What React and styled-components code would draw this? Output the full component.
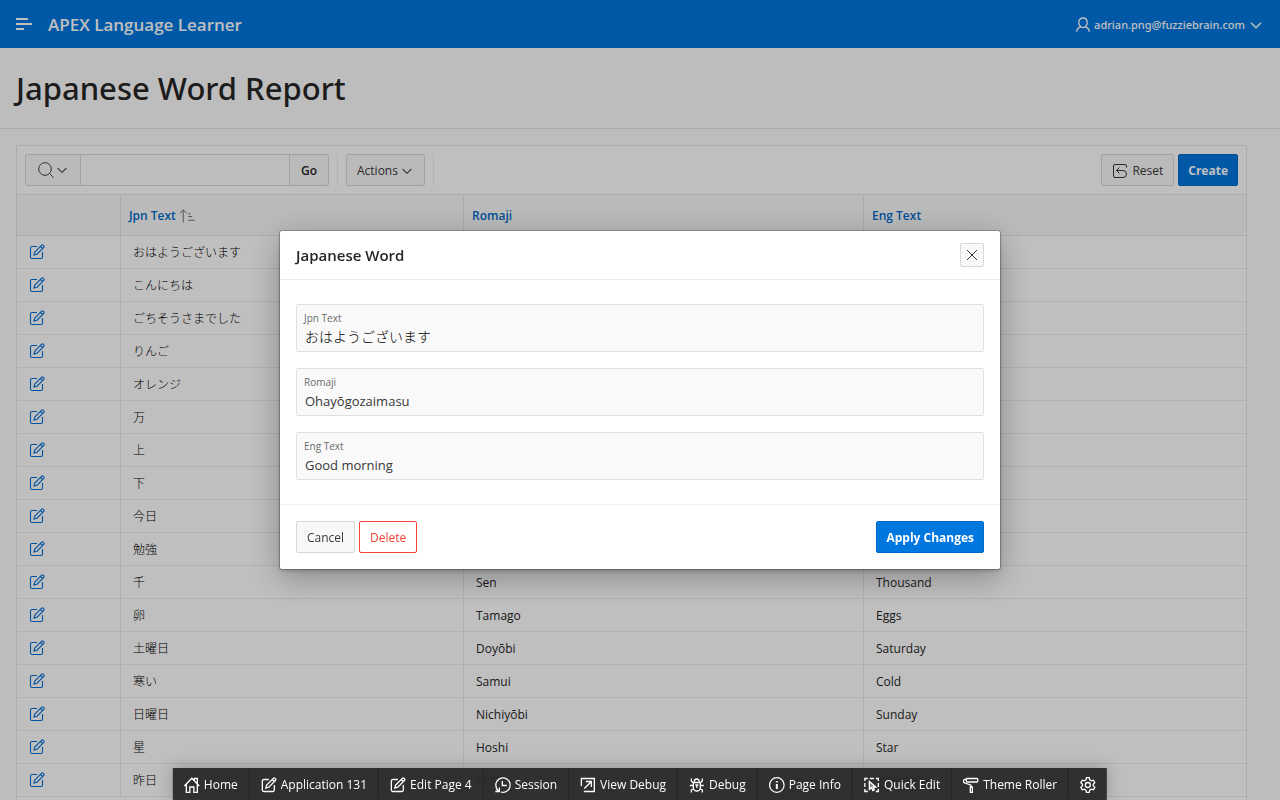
import React, { useState } from "react";
import styled, { createGlobalStyle, css } from "styled-components";

const GlobalStyle = createGlobalStyle`
  *, *::before, *::after { box-sizing: border-box; }
  body {
    margin: 0;
    overflow: hidden;
    background: #fcfcfc;
    color: #262626;
    font-family: "Open Sans", "Noto Sans CJK JP", sans-serif;
    font-size: 12px;
    line-height: 16px;
  }
  button, input { font: inherit; color: inherit; margin: 0; }
  svg { display: block; flex: none; }
`;

const Page = styled.div`
  display: flex;
  flex-direction: column;
  height: 100vh;
  overflow: hidden;
`;

const Header = styled.header`
  display: flex;
  flex: none;
  align-items: center;
  height: 48px;
  padding: 0 16px;
  background: #0076df;
  color: #fff;
`;

const PlainButton = styled.button`
  display: flex;
  align-items: center;
  gap: 4px;
  padding: 0;
  border: 0;
  background: none;
`;

const AppName = styled.a`
  margin-left: 16px;
  padding-top: 2px;
  color: inherit;
  font-size: 17px;
  font-weight: 600;
  line-height: 24px;
  text-decoration: none;
`;

const UserButton = styled(PlainButton)`
  gap: 3px;
  margin-left: auto;
  padding-top: 1px;
  font-family: "Noto Sans", sans-serif;
  font-size: 11px;
  font-weight: 500;
`;

const TitleBar = styled.div`
  flex: none;
  padding: 20px 16px;
  border-bottom: 1px solid #e6e6e6;
`;

const PageTitle = styled.h1`
  margin: 0;
  padding-top: 1px;
  font-family: "Noto Sans", sans-serif;
  font-size: 31px;
  line-height: 39px;
  font-weight: 500;
`;

const Main = styled.main`
  display: flex;
  flex: 1;
  flex-direction: column;
  padding: 16px 33px 0 16px;
`;

const Report = styled.section`
  flex: 1;
  border: 1px solid #e6e6e6;
  border-bottom: 0;
  border-radius: 2px 2px 0 0;
  background: #fff;
`;

const Toolbar = styled.div`
  display: flex;
  align-items: center;
  gap: 8px;
  padding: 8px;
  border-bottom: 1px solid #e6e6e6;
`;

const ToolbarEnd = styled.div`
  display: flex;
  gap: 4px;
  margin-left: auto;
`;

const Divider = styled.span`
  width: 1px;
  height: 32px;
  background: #ededed;
`;

const kinds = {
  normal: css`
    background: #f8f8f8;
    border-color: #d8d8d8;
    color: #383838;
  `,
  hot: css`
    background: #0076df;
    border-color: #0069c7;
    color: #fff;
    font-weight: 700;
  `,
  danger: css`
    background: #fff;
    border-color: #f44336;
    color: #f44336;
  `,
};

const Button = styled.button`
  display: inline-flex;
  align-items: center;
  justify-content: center;
  gap: 4px;
  height: 32px;
  padding: ${({ $kind }) => ($kind === "hot" ? "2px 9px 0" : "2px 10px 0")};
  border: 1px solid;
  border-radius: 2px;
  white-space: nowrap;
  ${({ $kind = "normal" }) => kinds[$kind]}
`;

const MenuButton = styled(Button)`
  gap: 2px;
`;

const SearchGroup = styled.form`
  display: flex;
  height: 32px;
  border: 1px solid #d8d8d8;
  border-radius: 2px;
  background: #f8f8f8;
`;

const SearchMenu = styled(PlainButton)`
  width: 54px;
  justify-content: center;
  gap: 1px;
  color: #404040;
`;

const SearchInput = styled.input`
  width: 210px;
  padding: 0 8px;
  border: solid #d8d8d8;
  border-width: 0 1px;
  background: #fdfdfd;
`;

const GoButton = styled(PlainButton)`
  width: 38px;
  padding-top: 2px;
  justify-content: center;
  font-weight: 600;
`;

const Table = styled.table`
  width: 100%;
  table-layout: fixed;
  border-collapse: separate;
  border-spacing: 0;
`;

const Col = styled.col`
  width: ${({ $width }) => $width};
`;

const HeadCell = styled.th`
  height: 41px;
  padding: 2px 8px 0;
  border: solid #e6e6e6;
  border-width: 0 1px 1px 0;
  background: #f9f9f9;
  text-align: left;
  &:last-child { border-right: 0; }
`;

const SortLink = styled.a`
  display: inline-flex;
  align-items: center;
  gap: 3px;
  vertical-align: middle;
  color: #006bcb;
  font-weight: 600;
  text-decoration: none;
`;

const SortMark = styled.span`
  color: #666;
`;

const Cell = styled.td`
  height: 33px;
  padding: 2px 12px 0;
  border: solid #ededed;
  border-width: 0 1px 1px 0;
  white-space: nowrap;
  &:last-child { border-right: 0; }
  &:lang(ja) {
    color: #000;
    font-weight: 300;
  }
`;

const EditCell = styled(Cell)`
  padding-top: 0;
`;

const EditLink = styled.a`
  display: inline-block;
  vertical-align: middle;
  color: #006fd4;
`;

const Overlay = styled.div`
  position: fixed;
  inset: 0;
  display: grid;
  place-items: center;
  background: rgba(0, 0, 0, 0.25);
`;

const Dialog = styled.section`
  width: 720px;
  max-width: 90vw;
  border-radius: 2px;
  background: #fff;
  box-shadow: 0 0 0 1px rgba(0, 0, 0, 0.2), 0 8px 32px rgba(0, 0, 0, 0.3), 0 2px 4px rgba(0, 0, 0, 0.2);
`;

const DialogHeader = styled.header`
  display: flex;
  align-items: center;
  justify-content: space-between;
  padding: 12px 16px;
  border-bottom: 1px solid #ededed;
`;

const DialogTitle = styled.h2`
  margin: 0;
  font-size: 15px;
  line-height: 24px;
  font-weight: 600;
`;

const CloseButton = styled(Button)`
  width: 24px;
  height: 24px;
  padding: 0;
`;

const Fields = styled.div`
  display: grid;
  gap: 16px;
  padding: 24px 16px;
`;

const Field = styled.div`
  display: flex;
  flex-direction: column;
  height: 48px;
  padding: 5px 7px;
  border: 1px solid #dfdfdf;
  border-radius: 2px;
  background: #f9f9f9;
`;

const FieldLabel = styled.label`
  color: #6b6b6b;
  font-size: 10px;
  line-height: 16px;
`;

const FieldInput = styled.input`
  width: 100%;
  height: 20px;
  padding: 1px 1px 0;
  border: 0;
  background: none;
  outline: none;
  color: #383838;
  font-size: 13px;
  &:lang(ja) {
    padding-top: 0;
    color: #000;
    font-size: 14px;
    font-weight: 300;
  }
`;

const DialogFooter = styled.footer`
  display: flex;
  gap: 4px;
  padding: 16px;
  border-top: 1px solid #f2f2f2;
`;

const ApplyButton = styled(Button)`
  margin-left: auto;
`;

const DevBar = styled.nav`
  position: fixed;
  bottom: 0;
  left: 50%;
  transform: translateX(-50%);
  display: flex;
  background: rgba(32, 32, 32, 0.9);
  backdrop-filter: blur(4px);
  box-shadow: 0 0 16px rgba(0, 0, 0, 0.25);
  color: #fff;
`;

const DevButton = styled(PlainButton)`
  height: 32px;
  padding: 1px 11px 0;
  border-right: 1px solid #262626;
  white-space: nowrap;
  &:last-child { border-right: 0; }
`;

const shapes = {
  menu: (
    <g strokeWidth="2">
      <path d="M0 3h12M0 8h16M0 13h8" />
    </g>
  ),
  user: (
    <path d="M8 1C10.800 1 12.200 2.900 12.200 5.500S10.300 10.600 8 10.600 3.800 8.100 3.800 5.500 5.200 1 8 1zM5.800 10C3.300 10.600 1.700 12 1.700 14.800M10.200 10c2.500.6 4.100 2 4.100 4.800" strokeWidth="1.300" />
  ),
  down: <path d="M3 5.800 8 10.700l5-4.900" />,
  search: (
    <>
      <circle cx="7" cy="7" r="6.300" />
      <path d="m11.500 11.500 4 4" />
    </>
  ),
  reset: <path d="M14.500 4.500V3A1.500 1.500 0 0 0 13 1.500H3A1.500 1.500 0 0 0 1.500 3v10A1.500 1.500 0 0 0 3 14.500h8a3.500 3.500 0 0 0 0-7H4.500M7.500 4.500l-3 3 3 3" />,
  sort: <path d="M4.500 15V1.500M1 5l3.500-3.500L8 5M10 5.500h2M10 8.500h4M10 12.500h6.500" />,
  edit: (
    <>
      <path d="M8 2.500H3A1.500 1.500 0 0 0 1.500 4v9A1.500 1.500 0 0 0 3 14.500h9a1.500 1.500 0 0 0 1.500-1.500V8" />
      <path d="m5 11 .8-3L12.700 1.200a1 1 0 0 1 1.400 0l.7.7a1 1 0 0 1 0 1.400L8 10.200 5 11zM11.500 2.500l2 2" />
    </>
  ),
  close: <path d="m3 3 10 10M13 3 3 13" />,
  home: <path d="M0.500 9 8 1.200 15.500 9M10.500 3.500v-2h3v5.500M2.500 7.500v8h3.500v-5.500h4v5.500h3.500v-8" />,
  session: <path d="M6 15A7.200 7.200 0 1 0 1.200 6.200C.6 9 1 11.500 3.500 14.200M4.500 10.500V14.500H0.500M7.500 4v4.500H12" />,
  open: <path d="M1.500 9V1.500h13v13H4M4.500 11.500l6.500-6.500M6 4.500h5.500V10" />,
  bug: <path d="M5.500 4.500a2.500 2.500 0 0 1 5 0M4.500 5.500h7v5a3.500 3.500 0 0 1-7 0zM8 8v3M4.500 8.500H1M11.500 8.500H15M4.500 6 2.500 4V1.500M11.500 6l2-2V1.500M5 11.500l-2.500 1.500v2.500M11 11.500l2.500 1.500v2.500M6.500 8h3" />,
  info: (
    <>
      <circle cx="8" cy="8" r="7.300" />
      <path d="M8 7v5M8 4v1.600" strokeWidth="2" />
    </>
  ),
  quick: (
    <>
      <path d="M1 4V1.500h3M6 1.500h4M12 1.500h2.500V4M14.500 6v4M14.500 12v2.500H12M4 14.500H1V12M1 6v4" />
      <path d="M5.500 4.500v8l2-2 1.500 3 1.500-.8-1.300-2.700H12z" fill="currentColor" fillOpacity=".4" />
    </>
  ),
  roller: <path d="M4 1.500h10a1 1 0 0 1 1 1V4a1 1 0 0 1-1 1H4.500a1 1 0 0 1-1-1V2a.5.5 0 0 1 .5-.5zM3.500 2.500H2A1.500 1.500 0 0 0 .5 4 2 2 0 0 0 2 6l5.500 1.800a1.500 1.500 0 0 1 1 1.400v.8M7.500 10h2v5.500h-2z" />,
  gear: (
    <>
      <path d="M6.600 0.700h2.800l.5 2.200 1.500.9 2.200-.6 1.400 2.400L13.400 7.200v1.600l1.600 1.600-1.400 2.400-2.200-.6-1.500.9-.5 2.200H6.600l-.5-2.200-1.500-.9-2.200.6L1 10.400l1.600-1.600V7.200L1 5.600l1.400-2.400 2.200.6 1.500-.9z" />
      <circle cx="8" cy="8" r="2.500" />
    </>
  ),
};

const Icon = ({ name, size = 16, width = 1 }) => (
  <svg
    width={size}
    height={size}
    viewBox={name === "sort" ? "0 0 17 16" : "0 0 16 16"}
    fill="none"
    stroke="currentColor"
    strokeWidth={width}
    aria-hidden="true"
  >
    {shapes[name]}
  </svg>
);

const words = [
  ["おはようございます", "Ohayōgozaimasu", "Good morning"],
  ["こんにちは", "Kon'nichiwa", "Hello"],
  ["ごちそうさまでした", "Gochisōsamadeshita", "After a meal"],
  ["りんご", "Ringo", "Apple"],
  ["オレンジ", "Orenji", "Orange"],
  ["万", "Man", "Ten thousand"],
  ["上", "Ue", "Up"],
  ["下", "Shita", "Down"],
  ["今日", "Kyō", "Today"],
  ["勉強", "Benkyō", "Study"],
  ["千", "Sen", "Thousand"],
  ["卵", "Tamago", "Eggs"],
  ["土曜日", "Doyōbi", "Saturday"],
  ["寒い", "Samui", "Cold"],
  ["日曜日", "Nichiyōbi", "Sunday"],
  ["星", "Hoshi", "Star"],
  ["昨日", "Kinō", "Yesterday"],
];

const tools = [
  ["home", "Home"],
  ["edit", "Application 131"],
  ["edit", "Edit Page 4"],
  ["session", "Session"],
  ["open", "View Debug"],
  ["bug", "Debug"],
  ["info", "Page Info"],
  ["quick", "Quick Edit"],
  ["roller", "Theme Roller"],
];

const fields = [
  ["jpn", "Jpn Text", "ja"],
  ["romaji", "Romaji", "en"],
  ["eng", "Eng Text", "en"],
];

export default function App() {
  const [word, setWord] = useState({
    jpn: "おはようございます",
    romaji: "Ohayōgozaimasu",
    eng: "Good morning",
  });

  return (
    <>
      <GlobalStyle />
      <Page>
        <Header>
          <PlainButton type="button" aria-label="Toggle navigation">
            <Icon name="menu" />
          </PlainButton>
          <AppName href="#">APEX Language Learner</AppName>
          <UserButton type="button">
            <Icon name="user" />
            adrian.png@fuzziebrain.com
            <Icon name="down" width={1.5} />
          </UserButton>
        </Header>
        <TitleBar>
          <PageTitle>Japanese Word Report</PageTitle>
        </TitleBar>
        <Main>
          <Report>
            <Toolbar>
              <SearchGroup onSubmit={(e) => e.preventDefault()}>
                <SearchMenu type="button" aria-label="Select columns to search">
                  <Icon name="search" />
                  <Icon name="down" size={14} width={1.2} />
                </SearchMenu>
                <SearchInput type="text" aria-label="Search" />
                <GoButton type="submit">Go</GoButton>
              </SearchGroup>
              <Divider />
              <MenuButton type="button">
                Actions
                <Icon name="down" size={14} width={1.2} />
              </MenuButton>
              <Divider />
              <ToolbarEnd>
                <Button type="button">
                  <Icon name="reset" />
                  Reset
                </Button>
                <Button type="button" $kind="hot">Create</Button>
              </ToolbarEnd>
            </Toolbar>
            <Table>
              <colgroup>
                <Col $width="104px" />
                <Col $width="343px" />
                <Col $width="400px" />
                <Col $width="auto" />
              </colgroup>
              <thead>
                <tr>
                  <HeadCell aria-label="Edit" />
                  <HeadCell scope="col">
                    <SortLink href="#">
                      Jpn Text
                      <SortMark><Icon name="sort" /></SortMark>
                    </SortLink>
                  </HeadCell>
                  <HeadCell scope="col"><SortLink href="#">Romaji</SortLink></HeadCell>
                  <HeadCell scope="col"><SortLink href="#">Eng Text</SortLink></HeadCell>
                </tr>
              </thead>
              <tbody>
                {words.map(([jpn, romaji, eng]) => (
                  <tr key={jpn}>
                    <EditCell>
                      <EditLink href="#" aria-label={`Edit ${romaji}`}>
                        <Icon name="edit" width={1.1} />
                      </EditLink>
                    </EditCell>
                    <Cell lang="ja">{jpn}</Cell>
                    <Cell>{romaji}</Cell>
                    <Cell>{eng}</Cell>
                  </tr>
                ))}
              </tbody>
            </Table>
          </Report>
        </Main>
      </Page>
      <Overlay>
        <Dialog role="dialog" aria-modal="true" aria-labelledby="dialog-title">
          <DialogHeader>
            <DialogTitle id="dialog-title">Japanese Word</DialogTitle>
            <CloseButton type="button" aria-label="Close">
              <Icon name="close" />
            </CloseButton>
          </DialogHeader>
          <Fields>
            {fields.map(([key, label, lang]) => (
              <Field key={key}>
                <FieldLabel htmlFor={key}>{label}</FieldLabel>
                <FieldInput
                  id={key}
                  type="text"
                  lang={lang}
                  value={word[key]}
                  onChange={(e) => setWord({ ...word, [key]: e.target.value })}
                />
              </Field>
            ))}
          </Fields>
          <DialogFooter>
            <Button type="button">Cancel</Button>
            <Button type="button" $kind="danger">Delete</Button>
            <ApplyButton type="button" $kind="hot">Apply Changes</ApplyButton>
          </DialogFooter>
        </Dialog>
      </Overlay>
      <DevBar aria-label="Developer toolbar">
        {tools.map(([icon, label]) => (
          <DevButton type="button" key={label}>
            <Icon name={icon} width={1.3} />
            {label}
          </DevButton>
        ))}
        <DevButton type="button" aria-label="Settings">
          <Icon name="gear" width={1.3} />
        </DevButton>
      </DevBar>
    </>
  );
}
